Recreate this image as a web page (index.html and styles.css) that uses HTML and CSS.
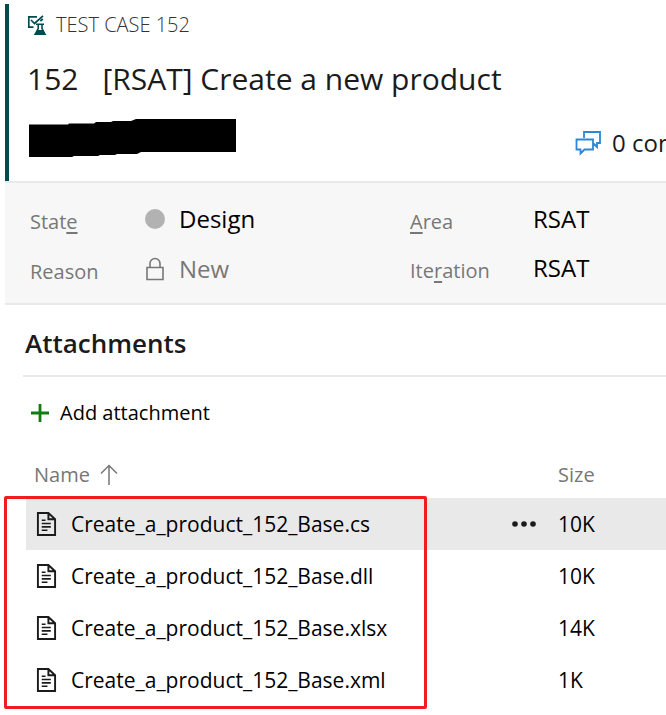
FILE: index.html
```html
<!DOCTYPE html>
<html lang="en">
<head>
<meta charset="utf-8">
<meta name="viewport" content="width=device-width, initial-scale=1">
<title>Test Case 152</title>
<link rel="stylesheet" href="styles.css">
</head>
<body>
<svg class="symbols" aria-hidden="true">
  <symbol id="doc" viewBox="0 0 22 26">
    <path d="M2 1.5H13L20 8V24.5H2Z M13 1.5V8H20" fill="none" stroke="currentColor" stroke-width="2"/>
    <path d="M6 9H10 M6 12.5H15.5 M6 16H15.5 M6 19.5H12" fill="none" stroke="currentColor" stroke-width="1.6"/>
  </symbol>
</svg>
<main class="work-item">
  <header class="item-header">
    <div class="item-type">
      <svg class="type-icon" viewBox="0 0 20 21" aria-hidden="true">
        <path d="M10 1.8H1.8V12.2H6.5 M4 5L7.5 8.5L16 .8 M13.4 6.2L15.8 4" fill="none" stroke="currentColor" stroke-width="1.7"/>
        <path d="M9 9.3H17 M11.2 9.5V13.5L8.2 19.2H18L15 13.5V9.5" fill="none" stroke="currentColor" stroke-width="1.6"/>
        <path d="M10.3 15H15.9L18.6 20H7.6Z" fill="currentColor"/>
      </svg>
      <span>TEST CASE 152</span>
    </div>
    <h1 class="item-title"><span>152</span><span>[RSAT] Create a new product</span></h1>
    <div class="item-meta">
      <svg class="redaction" viewBox="0 0 207 38" aria-hidden="true">
        <path d="M0 5.5H39L40 4.5H65L67 3H82L84 2H102L107 0H207V33H112L108 35H88L86 36H71L69 37H45L43 38H0Z"/>
      </svg>
      <a class="comments" href="#comments">
        <svg class="comments-icon" viewBox="0 0 27 26" aria-hidden="true">
          <path d="M9 8V2H25V13H22V17L18.5 13.5 M1.5 9.5H18V19.5H9.5L5.5 23.5V19.5H1.5Z" fill="none" stroke="currentColor" stroke-width="1.8"/>
        </svg>
        <span>0 comments</span>
      </a>
    </div>
  </header>

  <section class="fields">
    <dl class="field-list">
      <div class="field"><dt>Stat<u>e</u></dt><dd><span class="state-dot"></span>Design</dd></div>
      <div class="field"><dt>Reason</dt><dd class="locked"><svg class="lock-icon" viewBox="0 0 20 24" aria-hidden="true"><path d="M2 10.5H18V22.5H2Z M5 10.5V6.5A5 5 0 0 1 15 6.5V10.5" fill="none" stroke="currentColor" stroke-width="1.6"/></svg>New</dd></div>
    </dl>
    <dl class="field-list paths">
      <div class="field"><dt><u>A</u>rea</dt><dd>RSAT</dd></div>
      <div class="field"><dt>Ite<u>r</u>ation</dt><dd>RSAT</dd></div>
    </dl>
  </section>

  <section class="attachments">
    <h2>Attachments</h2>
    <button class="add" type="button">
      <svg class="add-icon" viewBox="0 0 20 20" aria-hidden="true"><path d="M10 1V19M1 10H19" fill="none" stroke="currentColor" stroke-width="2.8"/></svg>
      Add attachment
    </button>
    <div class="files">
      <table>
        <thead>
          <tr>
            <th class="name" scope="col"><span class="sort">Name<svg class="sort-icon" viewBox="0 0 18 22" aria-hidden="true"><path d="M9 21V1.5M1 9.5L9 1.5L17 9.5" fill="none" stroke="currentColor" stroke-width="1.5"/></svg></span></th>
            <td class="menu"></td>
            <th class="size" scope="col">Size</th>
          </tr>
        </thead>
        <tbody>
          <tr class="selected">
            <td class="name"><span class="file"><svg class="doc-icon" aria-hidden="true"><use href="#doc"/></svg>Create_a_product_152_Base.cs</span></td>
            <td class="menu"><button class="more" type="button" aria-label="More actions"><svg class="more-icon" viewBox="0 0 24 6" fill="currentColor" aria-hidden="true"><circle cx="3" cy="3" r="2.8"/><circle cx="12" cy="3" r="2.8"/><circle cx="21" cy="3" r="2.8"/></svg></button></td>
            <td class="size">10K</td>
          </tr>
          <tr>
            <td class="name"><span class="file"><svg class="doc-icon" aria-hidden="true"><use href="#doc"/></svg>Create_a_product_152_Base.dll</span></td>
            <td class="menu"></td>
            <td class="size">10K</td>
          </tr>
          <tr>
            <td class="name"><span class="file"><svg class="doc-icon" aria-hidden="true"><use href="#doc"/></svg>Create_a_product_152_Base.xlsx</span></td>
            <td class="menu"></td>
            <td class="size">14K</td>
          </tr>
          <tr>
            <td class="name"><span class="file"><svg class="doc-icon" aria-hidden="true"><use href="#doc"/></svg>Create_a_product_152_Base.xml</span></td>
            <td class="menu"></td>
            <td class="size">1K</td>
          </tr>
        </tbody>
      </table>
      <div class="highlight"></div>
    </div>
  </section>
</main>
</body>
</html>
```
FILE: styles.css
```css
* { box-sizing: border-box; }

body {
  margin: 0;
  background: #fff;
  color: #000;
  font-family: "Open Sans", "Noto Sans", sans-serif;
  font-size: 20px;
  line-height: 28px;
}

svg { display: block; flex: none; }
.symbols { position: absolute; width: 0; height: 0; }

.work-item { padding: 4px 0 8px 5px; }

.item-header {
  border-left: 4px solid #004b50;
  padding: 7px 0 24px 18px;
}

.item-type {
  display: flex;
  align-items: center;
  gap: 9px;
  color: #333;
  font-weight: 300;
}
.type-icon { width: 20px; height: 21px; color: #004b50; }

.item-title {
  display: flex;
  gap: 24px;
  margin: 20px 0;
  color: #1b1b1b;
  font-size: 30px;
  font-weight: 400;
  line-height: 40px;
  white-space: nowrap;
}

.item-meta {
  display: flex;
  align-items: flex-end;
  justify-content: space-between;
  padding-left: 2px;
}
.redaction { width: 207px; height: 38px; }

.comments {
  display: flex;
  flex: none;
  align-items: center;
  gap: 10px;
  width: 91px;
  overflow: hidden;
  color: #1b1b1b;
  font-size: 24px;
  text-decoration: none;
  white-space: nowrap;
}
.comments-icon { width: 27px; height: 26px; color: #2b88d8; }

.fields {
  display: grid;
  grid-template-columns: 380px 1fr;
  padding: 11px 0 9px 25px;
  border-top: 2px solid #e9e9e9;
  border-bottom: 2px solid #e9e9e9;
  background: #f7f7f7;
}
.field-list { margin: 0; }
.field { display: grid; grid-template-columns: 115px 1fr; align-items: center; height: 50px; }
.paths .field { grid-template-columns: 123px 1fr; height: 49px; }
.field dt { padding-top: 6px; color: #777; }
.field u { text-decoration-thickness: 2px; text-underline-offset: 3px; text-decoration-skip-ink: none; }
.field dd { display: flex; align-items: center; gap: 14px; margin: 0; font-size: 24px; }
.field .locked { color: #777; }
.state-dot { width: 20px; height: 20px; border-radius: 50%; background: #b2b2b2; }
.lock-icon { width: 20px; height: 24px; }

.attachments { padding: 18px 0 0 18px; }
.attachments h2 {
  margin: 0;
  padding: 0 2px 12px;
  border-bottom: 2px solid #e9e9e9;
  color: #1b1b1b;
  font-size: 26px;
  font-weight: 600;
  line-height: 40px;
}

.add {
  display: flex;
  align-items: center;
  gap: 10px;
  margin: 22px 0 0 7px;
  padding: 0;
  border: 0;
  background: none;
  color: #000;
  font: inherit;
}
.add-icon { width: 20px; height: 20px; color: #107c10; }

.files { position: relative; margin: 24px 0 0 3px; }
table { width: 100%; border-collapse: collapse; }
th, td { height: 52px; padding: 0; text-align: left; font-weight: 400; }
thead th, thead td { height: 47px; color: #777; }
tbody { font-size: 21px; }
.name { padding-left: 8px; }
.menu { width: 46px; }
.size { width: 108px; }
.selected { background: #e9e9e9; }

.sort { display: flex; align-items: center; gap: 10px; }
.sort-icon { width: 18px; height: 22px; }
.file { display: flex; align-items: center; gap: 14px; padding-left: 2px; white-space: nowrap; }
.doc-icon { width: 21px; height: 26px; color: #1b1b1b; }
.more { display: block; padding: 0; border: 0; background: none; color: #1b1b1b; }
.more-icon { width: 24px; height: 6px; }

/* Callout frame around the file names */
.highlight {
  position: absolute;
  top: 45px;
  bottom: -3px;
  left: -22px;
  width: 423px;
  border: 3px solid #f01c24;
  border-radius: 2px;
  pointer-events: none;
}
```
